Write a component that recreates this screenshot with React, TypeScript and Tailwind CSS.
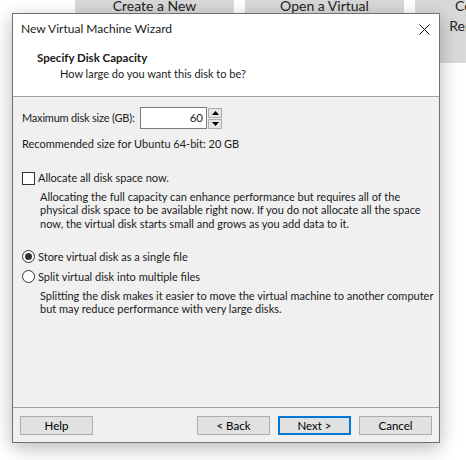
import React from 'react';

// Launcher tiles that sit behind the wizard window
const tiles = [
  { left: 'left-[75px]', lines: ['Create a New', 'Virtual Machine'] },
  { left: 'left-[245px]', lines: ['Open a Virtual', 'Machine'] },
  { left: 'left-[415px]', lines: ['Connect to a', 'Remote Server'] },
];

const Btn: React.FC<{ label: string; primary?: boolean }> = ({ label, primary }) => (
  <button
    type="button"
    className={
      'w-[73px] h-[19px] bg-[#e1e1e1] text-[11.5px] leading-none text-black flex items-center justify-center ' +
      (primary ? 'border-2 border-[#0078d7]' : 'border border-[#adadad]')
    }
  >
    {label}
  </button>
);

const Radio: React.FC<{ checked?: boolean; label: string }> = ({ checked, label }) => (
  <div className="flex items-center h-[16px]">
    <span className="w-[13px] h-[13px] rounded-full border border-[#333] bg-white flex items-center justify-center">
      {checked && <span className="w-[7px] h-[7px] rounded-full bg-[#333]" />}
    </span>
    <span className="ml-[3px]">{label}</span>
  </div>
);

export default function App() {
  return (
    <div
      className="relative w-[466px] h-[460px] bg-white overflow-hidden text-[11px] text-[#1a1a1a]"
      style={{ fontFamily: '"Segoe UI", Lato, sans-serif' }}
    >
      {tiles.map((t) => (
        <div
          key={t.left}
          className={'absolute top-0 w-[159px] h-[63px] bg-[#d9d9d9] text-[14px] leading-[20px] text-center text-[#222] ' + t.left}
        >
          <div className="-mt-[4px]">
            {t.lines.map((l) => (
              <div key={l}>{l}</div>
            ))}
          </div>
        </div>
      ))}

      {/* wizard window */}
      <div className="absolute left-[12px] top-[13px] w-[428px] h-[430px] border border-[#707070] bg-[#f0f0f0] shadow-[0_5px_18px_rgba(0,0,0,0.28)] flex flex-col">
        <div className="h-[83px] bg-white border-b border-[#a0a0a0] flex flex-col">
          <div className="h-[30px] flex items-center justify-between pl-[8px] pr-[9px]">
            <span className="text-[12px]">New Virtual Machine Wizard</span>
            <svg width="11" height="11" viewBox="0 0 11 11">
              <path d="M0.5 0.5 L10.5 10.5 M10.5 0.5 L0.5 10.5" stroke="#111" strokeWidth="1" />
            </svg>
          </div>
          <div className="mt-[6px] pl-[24px] text-[11.5px] font-bold leading-[16px]">Specify Disk Capacity</div>
          <div className="pl-[47px] leading-[16px]">How large do you want this disk to be?</div>
        </div>

        <div className="flex-1 pl-[9px] pr-[9px] pt-[10px] leading-[16px]">
          <div className="flex items-center h-[22px]">
            <span className="w-[118px] shrink-0 tracking-[-0.2px]">Maximum disk size (GB):</span>
            <div className="w-[67px] h-[22px] border border-[#7a7a7a] bg-white flex items-center justify-end pr-[3px] text-[11.5px]">
              60
            </div>
            <div className="ml-[1px] flex flex-col gap-[1px]">
              <span className="w-[14px] h-[10px] bg-[#e5e5e5] border border-[#adadad] flex items-center justify-center">
                <svg width="7" height="4" viewBox="0 0 7 4"><path d="M3.5 0 L7 4 L0 4 Z" fill="#000" /></svg>
              </span>
              <span className="w-[14px] h-[10px] bg-[#e5e5e5] border border-[#adadad] flex items-center justify-center">
                <svg width="7" height="4" viewBox="0 0 7 4"><path d="M0 0 L7 0 L3.5 4 Z" fill="#000" /></svg>
              </span>
            </div>
          </div>
          <div className="mt-[7px]">Recommended size for Ubuntu 64-bit: 20 GB</div>

          <div className="mt-[18px] flex items-center h-[16px]">
            <span className="w-[13px] h-[13px] border border-[#333] bg-white" />
            <span className="ml-[3px]">Allocate all disk space now.</span>
          </div>
          <p className="mt-[4px] ml-[18px] leading-[13.3px] whitespace-nowrap">
            Allocating the full capacity can enhance performance but requires all of the
            <br />
            physical disk space to be available right now. If you do not allocate all the space
            <br />
            now, the virtual disk starts small and grows as you add data to it.
          </p>

          <div className="mt-[19px] flex flex-col gap-[4px]">
            <Radio checked label="Store virtual disk as a single file" />
            <Radio label="Split virtual disk into multiple files" />
          </div>
          <p className="mt-[4px] ml-[18px] leading-[13.3px] whitespace-nowrap">
            Splitting the disk makes it easier to move the virtual machine to another computer
            <br />
            but may reduce performance with very large disks.
          </p>
        </div>

        <div className="h-[35px] border-t border-[#a0a0a0] flex items-start pt-[8px] px-[7px]">
          <Btn label="Help" />
          <div className="flex-1" />
          <div className="flex gap-[8px]">
            <Btn label="< Back" />
            <Btn label="Next >" primary />
            <Btn label="Cancel" />
          </div>
        </div>
      </div>
    </div>
  );
}
